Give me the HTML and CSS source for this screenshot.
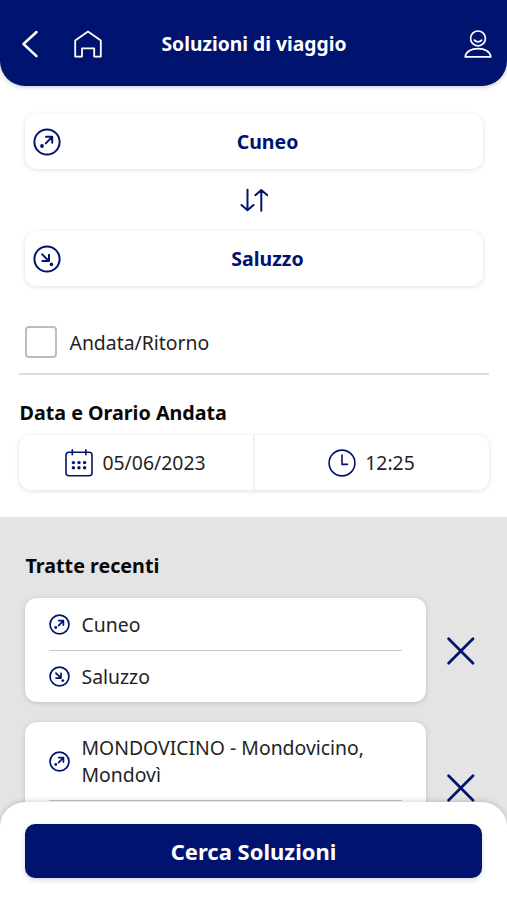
FILE: index.html
```html
<!DOCTYPE html>
<html lang="it">
<head>
<meta charset="utf-8">
<title>Soluzioni di viaggio</title>
<link rel="stylesheet" href="styles.css">
</head>
<body>
<svg class="defs" width="0" height="0" aria-hidden="true">
  <symbol id="depart" viewBox="0 0 28 28">
    <circle cx="14" cy="14" r="12.6"/>
    <path d="M12.8 15.4 18.6 9.4M13 8.8h6.2v6"/>
    <circle class="dot" cx="9" cy="18" r="1.9"/>
  </symbol>
  <symbol id="arrive" viewBox="0 0 28 28">
    <circle cx="14" cy="14" r="12.6"/>
    <path d="M9.2 9.4l6.2 6.2M16 9.8v6.3H9.4"/>
    <circle class="dot" cx="18.4" cy="19.4" r="1.8"/>
  </symbol>
  <symbol id="cross" viewBox="0 0 28 28">
    <path d="M1.6 1.8l24.4 24.4M26 1.8 1.6 26.2"/>
  </symbol>
</svg>
<div class="screen">
  <header class="topbar">
    <svg class="back" viewBox="0 0 18 28"><path d="M15.5 2 2.5 14 15.5 26.2"/></svg>
    <svg class="home" viewBox="0 0 28 28"><path d="M1.2 26.6V10.4L14 1.6l12.8 8.8v16.2h-6.6V18.4H8v8.2z"/></svg>
    <h1>Soluzioni di viaggio</h1>
    <svg class="user" viewBox="0 0 28 28"><circle cx="14" cy="8.4" r="7.4"/><path d="M10.3 10.2c2.2 2.3 5.2 2.3 7.4 0M1.2 26.8c.6-5.2 6-8.2 12.8-8.2s12.2 3 12.8 8.2z"/></svg>
  </header>

  <main>
    <section class="search">
      <div class="place"><svg class="icon"><use href="#depart"/></svg><b>Cuneo</b></div>
      <div class="swap"><svg viewBox="0 0 28 24"><path d="M7.5 1.8v20M1.5 17l6 5.3 6-5.3M21.3 22.8V2.2M15.3 7.2l6-5.3 6 5.3"/></svg></div>
      <div class="place"><svg class="icon"><use href="#arrive"/></svg><b>Saluzzo</b></div>
      <label class="round"><span class="box"></span>Andata/Ritorno</label>
    </section>

    <section class="when">
      <h2>Data e Orario Andata</h2>
      <div class="when-card">
        <div class="when-cell date">
          <svg viewBox="0 0 28 28"><rect x="1" y="3.2" width="26" height="23.6" rx="3"/><path d="M7.3.8v5M20.9.8v5"/><g class="dot"><circle cx="8.4" cy="13.6" r="1.7"/><circle cx="14" cy="13.6" r="1.7"/><circle cx="19.6" cy="13.6" r="1.7"/><circle cx="8.4" cy="18.8" r="1.7"/><circle cx="14" cy="18.8" r="1.7"/><circle cx="19.6" cy="18.8" r="1.7"/></g></svg>
          <span>05/06/2023</span>
        </div>
        <div class="when-cell time">
          <svg viewBox="0 0 28 28"><circle cx="14" cy="14" r="12.9"/><path d="M14 6v9.4h5.4"/></svg>
          <span>12:25</span>
        </div>
      </div>
    </section>

    <section class="recent">
      <h2>Tratte recenti</h2>
      <div class="row">
        <div class="card">
          <div class="stop"><svg class="icon"><use href="#depart"/></svg><span>Cuneo</span></div>
          <div class="stop"><svg class="icon"><use href="#arrive"/></svg><span>Saluzzo</span></div>
        </div>
        <svg class="remove"><use href="#cross"/></svg>
      </div>
      <div class="row">
        <div class="card">
          <div class="stop tall"><svg class="icon"><use href="#depart"/></svg><span>MONDOVICINO - Mondovicino, Mondovì</span></div>
          <div class="stop"></div>
        </div>
        <svg class="remove"><use href="#cross"/></svg>
      </div>
    </section>
  </main>

  <footer class="bottom"><button>Cerca Soluzioni</button></footer>
</div>
</body>
</html>
```

FILE: styles.css
```css
* { box-sizing: border-box; }
body {
  margin: 0;
  background: #fff;
  color: #242424;
  font: 19.4px/27px "Noto Sans", "Open Sans", sans-serif;
}
h1, h2 { margin: 0; font-size: 19.7px; line-height: 26px; font-weight: 700; }
h1 { font-size: 19.3px; }
h2 { color: #080808; padding-left: .5px; }
svg { display: block; flex: none; fill: none; stroke: #00136f; stroke-width: 2; stroke-linecap: round; stroke-linejoin: round; }
.defs { position: absolute; }
.dot { fill: #00136f; stroke: none; }

.screen { height: 900px; overflow: hidden; display: flex; flex-direction: column; }
main { flex: 1; min-height: 0; display: flex; flex-direction: column; }

.topbar {
  flex: none;
  height: 86px;
  padding: 2px 15px 0 21px;
  display: flex;
  align-items: center;
  background: #00136f;
  border-radius: 0 0 25px 25px;
  box-shadow: 0 1px 5px rgba(0, 0, 0, .22);
}
.topbar svg { stroke: #fff; }
.topbar h1 { flex: 1; margin-right: 58px; text-align: center; color: #fff; }
.back { width: 18px; height: 28px; stroke-width: 2.5; }
.home { width: 28px; height: 28px; margin-left: 35px; stroke-width: 1.8; }
.user { width: 28px; height: 28px; stroke-width: 1.7; }

.search { flex: none; margin: 0 18px 0 19px; padding: 28px 6px 0; border-bottom: 2px solid #dcdcdc; height: 289px; }
.place {
  height: 55px;
  padding: 0 9px 0 8px;
  display: flex;
  align-items: center;
  color: #00136f;
  background: #fff;
  border-radius: 12px;
  box-shadow: 0 1px 5px rgba(0, 0, 0, .13);
}
.place .icon { width: 28px; height: 28px; }
.place b { flex: 1; padding-bottom: 1px; text-align: center; font-size: 19.5px; }
.swap { height: 62px; display: flex; align-items: center; justify-content: center; }
.swap svg { width: 28px; height: 24px; }
.round { display: flex; align-items: center; gap: 12.5px; margin-top: 40px; height: 32px; line-height: 25px; }
.box { width: 32px; height: 32px; border: 2px solid #bdbdbd; border-radius: 4px; }

.when { flex: none; height: 142px; padding: 25px 18px 0 19px; }
.when-card {
  margin-top: 9px;
  height: 55px;
  display: flex;
  border-radius: 12px;
  background: #fff;
  box-shadow: 0 1px 5px rgba(0, 0, 0, .13);
}
.when-cell { flex: 1; display: flex; align-items: center; justify-content: center; gap: 9px; padding-right: 1px; }
.when-cell svg { width: 28px; height: 28px; stroke-width: 1.6; }
.date { border-right: 2px solid #f0f0f0; }

.recent { flex: 1; padding: 36px 25px 0; background: #e4e4e4; }
.recent h2 { margin-bottom: 19px; }
.row { display: flex; align-items: center; gap: 20.5px; margin-bottom: 20px; }
.card { width: 401px; padding: 0 24px; border-radius: 12px; background: #fff; box-shadow: 0 1px 5px rgba(0, 0, 0, .16); }
.stop { height: 52px; display: flex; align-items: center; gap: 11.5px; }
.stop + .stop { border-top: 1px solid #c8c8c8; }
.stop .icon { width: 21px; height: 21px; stroke-width: 2.3; }
.tall { height: 78px; }
.remove { width: 28px; height: 28px; margin-top: 2px; stroke-width: 2.7; }

.bottom {
  flex: none;
  position: relative;
  height: 98px;
  padding: 22px 25px;
  background: #fff;
  border-radius: 25px 25px 0 0;
  box-shadow: 0 -1px 5px rgba(0, 0, 0, .18);
}
.bottom::before { content: ""; position: absolute; z-index: -1; inset: 0; background: #e4e4e4; }
.bottom button {
  display: block;
  width: 100%;
  height: 54px;
  padding: 0;
  border: 0;
  border-radius: 10px;
  background: #00136f;
  color: #fff;
  font: 700 22px/30px "Noto Sans", "Open Sans", sans-serif;
  box-shadow: 0 2px 5px rgba(0, 0, 0, .16);
}
```
